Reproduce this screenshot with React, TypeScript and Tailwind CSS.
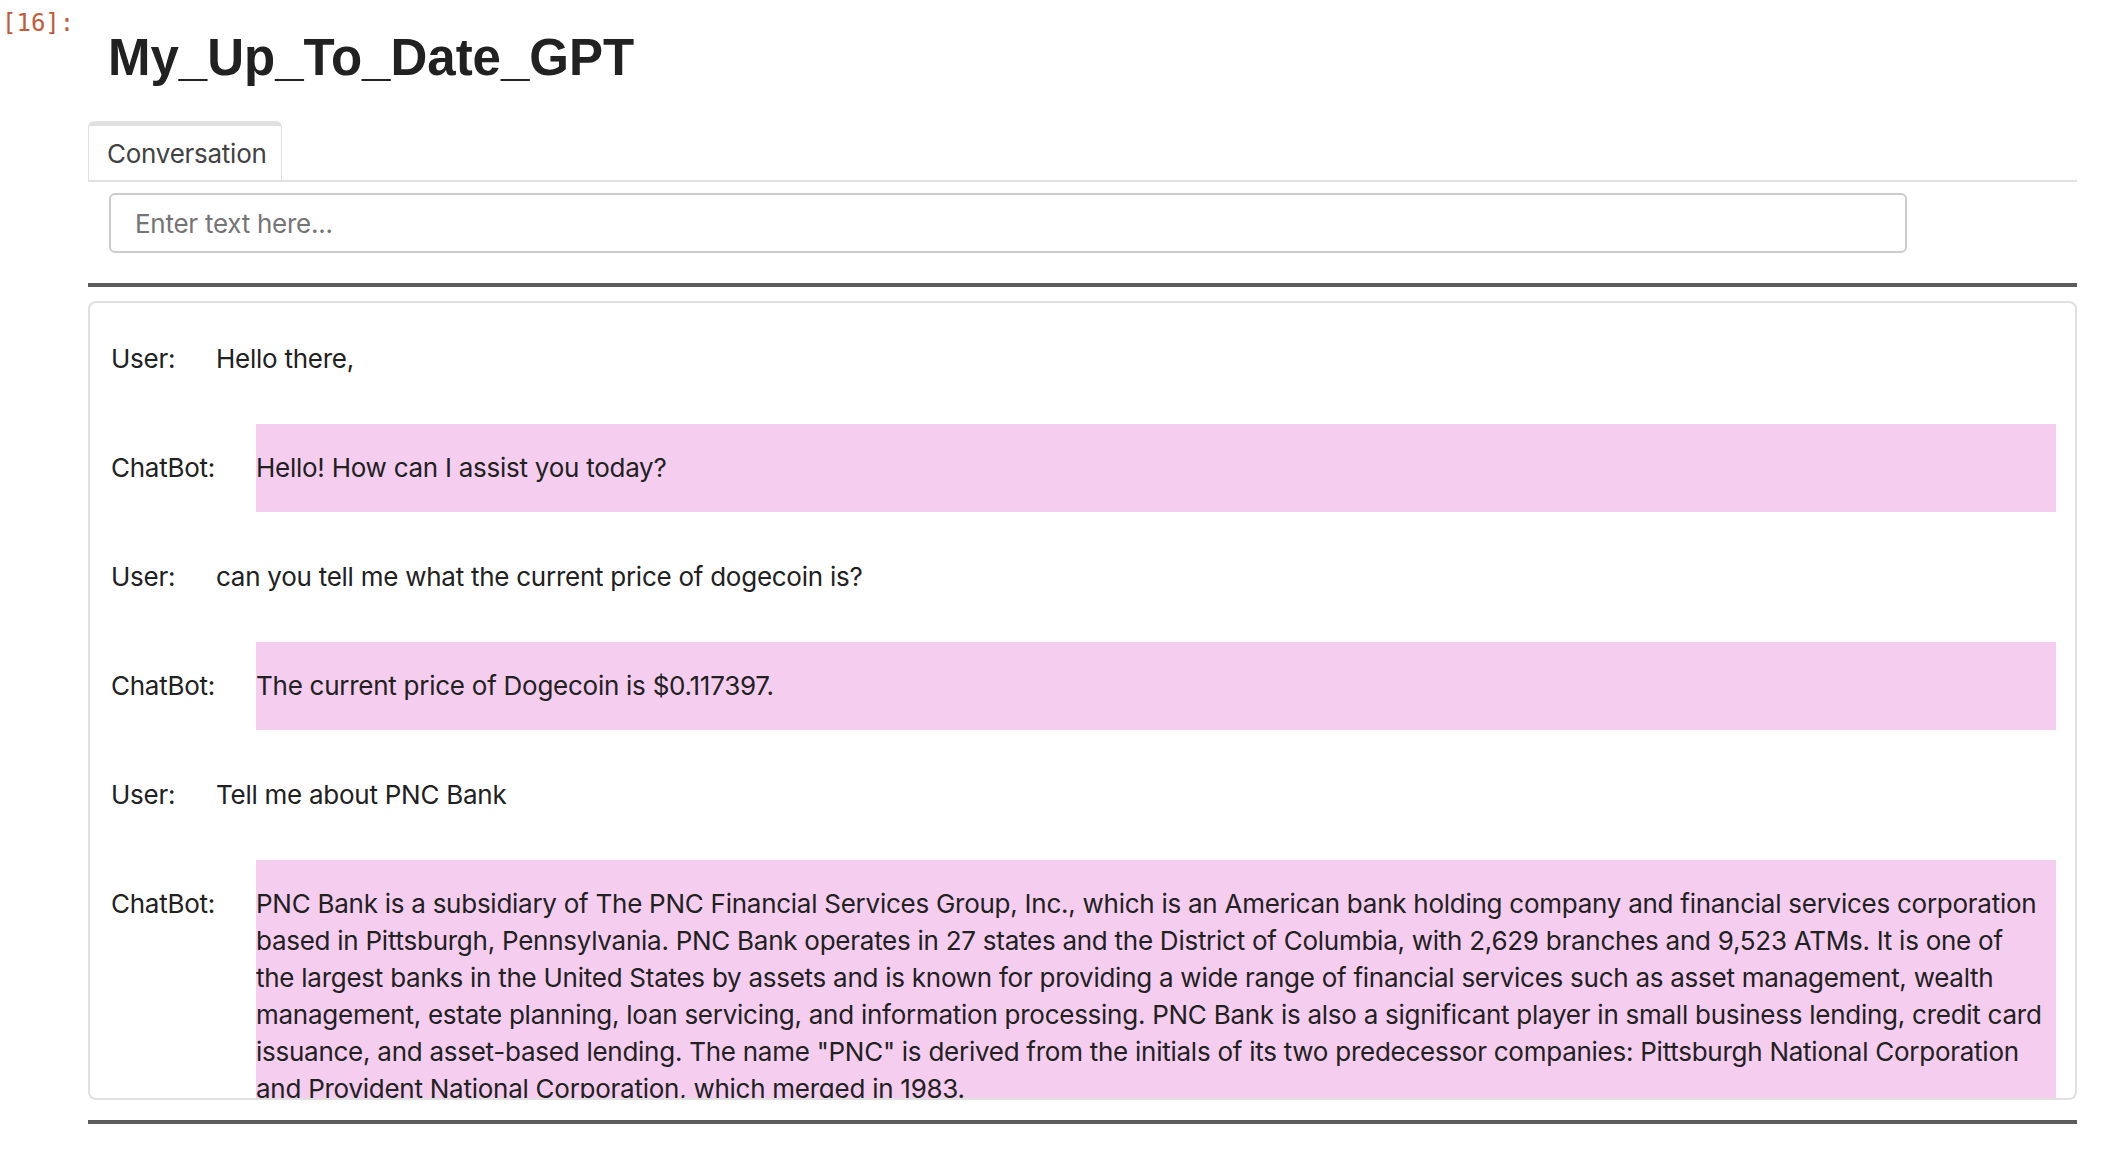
import React from "react";

const PNC_LINES = [
  'PNC Bank is a subsidiary of The PNC Financial Services Group, Inc., which is an American bank holding company and financial services corporation',
  "based in Pittsburgh, Pennsylvania. PNC Bank operates in 27 states and the District of Columbia, with 2,629 branches and 9,523 ATMs. It is one of",
  "the largest banks in the United States by assets and is known for providing a wide range of financial services such as asset management, wealth",
  "management, estate planning, loan servicing, and information processing. PNC Bank is also a significant player in small business lending, credit card",
  'issuance, and asset-based lending. The name "PNC" is derived from the initials of its two predecessor companies: Pittsburgh National Corporation',
  "and Provident National Corporation, which merged in 1983.",
];

const MESSAGES: { role: "user" | "bot"; lines: string[] }[] = [
  { role: "user", lines: ["Hello there,"] },
  { role: "bot", lines: ["Hello! How can I assist you today?"] },
  { role: "user", lines: ["can you tell me what the current price of dogecoin is?"] },
  { role: "bot", lines: ["The current price of Dogecoin is $0.117397."] },
  { role: "user", lines: ["Tell me about PNC Bank"] },
  { role: "bot", lines: PNC_LINES },
];

const Message = ({ role, lines }: { role: "user" | "bot"; lines: string[] }) => (
  <div className="flex items-start">
    <div className={`shrink-0 pt-[25px] ${role === "user" ? "w-[105px]" : "w-[145px]"}`}>
      {role === "user" ? "User:" : "ChatBot:"}
    </div>
    <div className={`flex-1 min-w-0 overflow-hidden pt-[25px] pb-[26px] ${role === "bot" ? "bg-[#f5cdef]" : ""}`}>
      {lines.map((line, i) => (
        <span key={i} className="block whitespace-nowrap">
          {line}
        </span>
      ))}
    </div>
  </div>
);

export default function App() {
  return (
    <div className="w-[2110px] h-[1150px] bg-white overflow-hidden flex font-['Inter',sans-serif] text-[26px] leading-[37px] tracking-[-0.26px] text-[#212121]">
      {/* prompt */}
      <div className="w-[88px] shrink-0 pl-[2px] pt-[3px]">
        <span className="font-['DejaVu_Sans_Mono',monospace] text-[24px] leading-[28px] tracking-normal text-[#c15b3a]">[16]:</span>
      </div>

      <div className="w-[1989px] shrink-0 flex flex-col">
        <h1 className="pl-[20px] mt-[31px] font-['Liberation_Sans',Arial,sans-serif] font-bold text-[51px] leading-[54px] tracking-normal text-[#212121]">
          My_Up_To_Date_GPT
        </h1>

        {/* tabs */}
        <div className="mt-[36px] flex border-b-2 border-[#e0e0e0]">
          <div className="w-[194px] border-t-[5px] border-x border-[#e0e0e0] rounded-t-[6px] pl-[18px] pt-[9px] pb-[8px] text-[#424242]">
            Conversation
          </div>
        </div>

        <div className="mt-[11px] ml-[21px] w-[1798px] h-[60px] border-2 border-[#cccccc] rounded-[6px] flex items-center pl-[24px]">
          <input
            className="w-full outline-none bg-transparent placeholder:text-[#757575] text-[#212121]"
            placeholder="Enter text here..."
          />
        </div>

        <div className="mt-[30px] h-[4px] bg-[#5c5c5c]" />

        {/* chat log */}
        <div className="mt-[14px] h-[799px] border-2 border-[#e0e0e0] rounded-[8px] overflow-hidden pt-[12px] pl-[21px] pr-[19px]">
          <div className="flex flex-col gap-[21px]">
            {MESSAGES.map((m, i) => (
              <Message key={i} role={m.role} lines={m.lines} />
            ))}
          </div>
        </div>

        <div className="mt-[20px] h-[4px] bg-[#5c5c5c]" />
      </div>
    </div>
  );
}
